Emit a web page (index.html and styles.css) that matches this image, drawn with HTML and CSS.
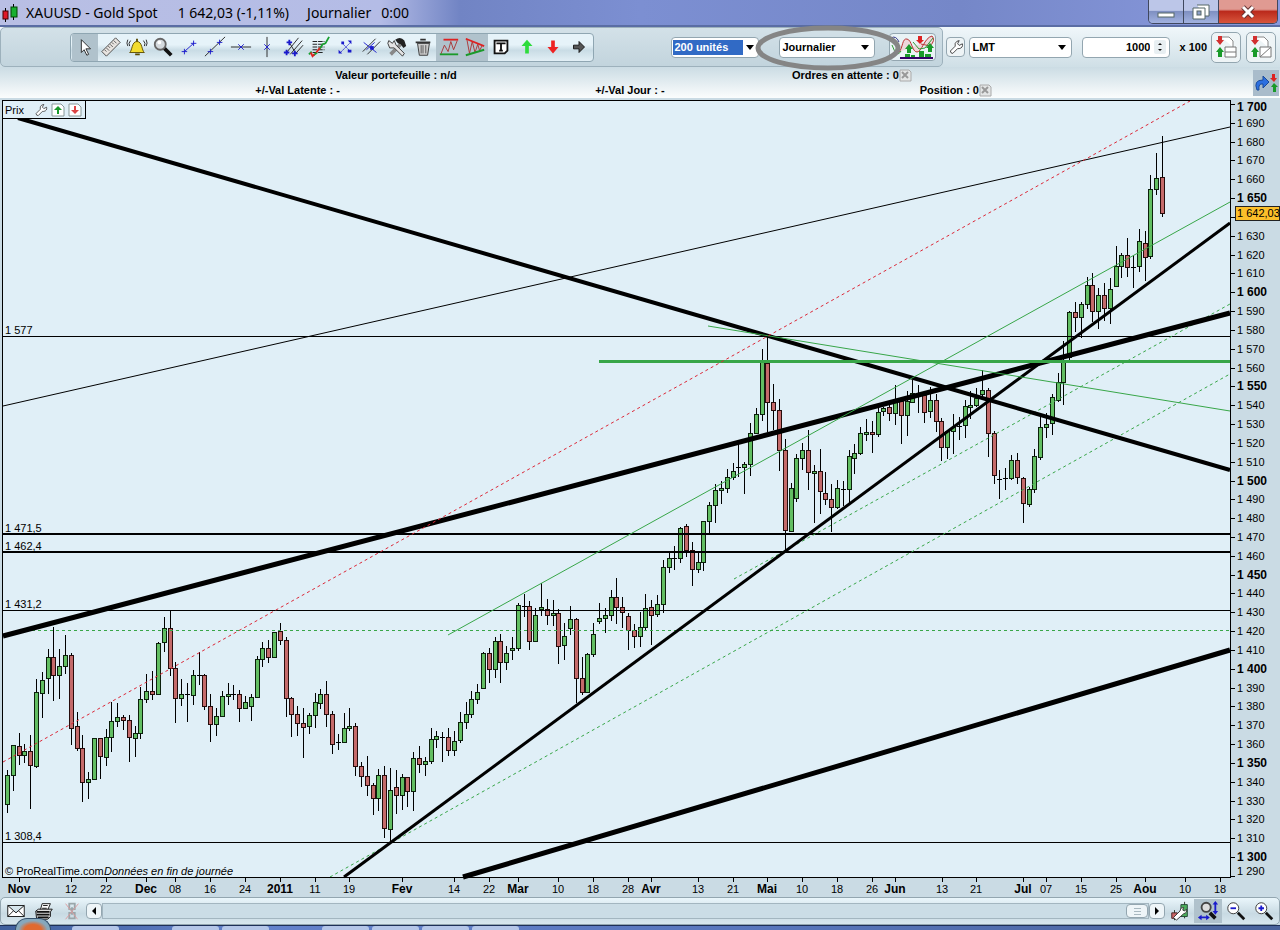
FILE: index.html
```html
<!DOCTYPE html>
<html lang="fr">
<head>
    <meta charset="UTF-8">
    <meta name="viewport" content="width=device-width, initial-scale=1.0">
    <title>XAUUSD - Gold Spot</title>
    <link rel="stylesheet" href="styles.css">
</head>
<body>

    <header class="titlebar">
        <svg class="app-icon" width="16" height="18" viewBox="0 0 16 18"><path d="M3.5 4v14M11.5 0v16" stroke="#000"/><rect x="1" y="7" width="5" height="8" fill="#e01828" stroke="#400"/><rect x="9" y="3" width="6" height="10" fill="#18b030" stroke="#040"/></svg>
        <h1>XAUUSD - Gold Spot</h1>
        <span class="quote">1 642,03 (-1,11%)</span>
        <span class="period">Journalier</span>
        <span>0:00</span>
        <div class="window-buttons">
            <button aria-label="Réduire"><svg width="18" height="14" viewBox="0 0 18 14"><rect x="1" y="8" width="16" height="4" fill="#fff" stroke="#566"/></svg></button>
            <button aria-label="Restaurer"><svg width="18" height="16" viewBox="0 0 18 16"><path d="M5 1h12v11h-4M1 4h12v11H1z" fill="#fff" stroke="#566"/><rect x="5" y="7" width="4" height="4" fill="#8ea0c8" stroke="#566"/></svg></button>
            <button class="close" aria-label="Fermer"><svg width="18" height="14" viewBox="0 0 18 14"><path d="M4 2l10 10M14 2L4 12" stroke="#633" stroke-width="5"/><path d="M4 2l10 10M14 2L4 12" stroke="#fff" stroke-width="3"/></svg></button>
        </div>
    </header>

    <div class="toolbar">
        <div class="tools-panel">
            <div class="tools">
                <button class="active" aria-label="Pointeur"><svg viewBox="0 0 24 24"><path d="M8 4v14l3-3 3 6 2-1-3-6h5z" fill="#fff" stroke="#222"/></svg></button>
                <button aria-label="Règle"><svg viewBox="0 0 24 24"><path d="M2 17L17 2l5 5L7 22z" fill="#e8e4e0" stroke="#444"/><path d="M5 15l2 2M7 13l3 3M9 11l2 2M11 9l3 3M13 7l2 2M15 5l3 3" stroke="#555"/></svg></button>
                <button aria-label="Alarme"><svg viewBox="0 0 24 24"><path d="M4 18c3-2 2-12 8-12s5 10 8 12z" fill="#f2dc30" stroke="#5a4a00"/><path d="M12 3v3M10 20h5" stroke="#5a4a00" stroke-width="2"/><path d="M5 5q-3 3-1 6M2 4q-2 4 0 7M19 5q3 3 1 6M22 4q2 4 0 7" fill="none" stroke="#222"/></svg></button>
                <button aria-label="Loupe"><svg viewBox="0 0 24 24"><path d="M13 13l8 8" stroke="#111" stroke-width="4"/><circle cx="9" cy="9" r="6" fill="#d4dade" stroke="#666" stroke-width="2"/><circle cx="8" cy="7" r="2" fill="#fff"/></svg></button>
                <button aria-label="Segment"><svg viewBox="0 0 24 24"><path d="M7 17L17 8" stroke="#1a1acc"/><path d="M4 17h6M7 14v6M14 8h6M17 5v6" stroke="#1a1acc"/></svg></button>
                <button aria-label="Droite"><svg viewBox="0 0 24 24"><path d="M1 22L23 1" stroke="#222"/><path d="M4 17h6M7 14v6M14 7h6M17 4v6" stroke="#1a1acc"/></svg></button>
                <button aria-label="Ligne horizontale"><svg viewBox="0 0 24 24"><path d="M1 12h22" stroke="#222"/><path d="M9 9l6 6M15 9l-6 6" stroke="#1a1acc"/></svg></button>
                <button aria-label="Ligne verticale"><svg viewBox="0 0 24 24"><path d="M12 1v22" stroke="#222"/><path d="M9 9l6 6M15 9l-6 6" stroke="#1a1acc"/></svg></button>
                <button aria-label="Fourchette"><svg viewBox="0 0 24 24"><path d="M5 18L18 2M9 20L22 5M15 19l8-9M8 7l7 12" stroke="#222"/><path d="M2 18h6M5 15v6M5 7h6M8 4v6M11 19h6M14 16v6" stroke="#1a1acc" stroke-width="2"/></svg></button>
                <button aria-label="Fibonacci"><svg viewBox="0 0 24 24"><path d="M5 6h13M5 9h13M5 12h13M5 15h13M5 18h12" stroke="#111" stroke-dasharray="5 1"/><path d="M12 15l4-6 3-1 4-7" fill="none" stroke="#18a030" stroke-width="2"/><path d="M1 20l3-3M6 21l4-3" stroke="#18a030" stroke-width="2"/><path d="M3 18l2 4 2-2M9 18l4-5" fill="none" stroke="#e02020" stroke-width="2"/></svg></button>
                <button aria-label="Déplacer"><svg viewBox="0 0 24 24"><path d="M7 18L18 7M9 8l9 9" stroke="#1a1acc" stroke-dasharray="2 1"/><path d="M5 15v4h4zM19 9V5h-4zM8 6h3v3H8zM15 15h4v3h-4z" fill="#1a1acc"/></svg></button>
                <button aria-label="Parallèles"><svg viewBox="0 0 24 24"><path d="M3 17L17 3M8 20L22 6" stroke="#222"/><path d="M4 7l14 11M7 15l9-8" stroke="#1a1acc"/><path d="M11 11h4v4h-4z" fill="#1a1acc"/></svg></button>
                <button aria-label="Outils"><svg viewBox="0 0 24 24"><path d="M5 20L16 9" stroke="#888" stroke-width="4"/><path d="M10 4q6-4 10 1l2 6-3 2-3-4-3-1z" fill="#222"/><path d="M3 5l4 3 2-3 2 5 9 9-2 3-9-9-5 0-2-5z" fill="#e4e4e4" stroke="#333"/></svg></button>
                <button aria-label="Supprimer"><svg viewBox="0 0 24 24"><path d="M6 8h13l-2 13H8z" fill="#ccc" stroke="#333"/><path d="M4 7h16M9 4h6" stroke="#333" stroke-width="2"/><path d="M10 10v9M12 10v9M15 10v9" stroke="#555"/></svg></button>
                <button class="active" aria-label="Indicateur"><svg viewBox="0 0 24 24"><path d="M3 20l4-10 4 7 3-11 3 9 4-10" fill="none" stroke="#a33"/><path d="M6 4h16" stroke="#d22" stroke-width="2"/><path d="M2 20h20" stroke="#1a9a2a" stroke-width="2"/></svg></button>
                <button class="active" aria-label="Figures"><svg viewBox="0 0 24 24"><path d="M3 3l3 16 3-13 3 12 3-9 2 7 3-6" fill="none" stroke="#a33"/><path d="M2 3l20 8" stroke="#d22" stroke-width="2"/><path d="M2 21l20-6" stroke="#1a9a2a" stroke-width="2"/></svg></button>
                <button aria-label="Texte"><svg viewBox="0 0 24 24"><path d="M5 5h14v11l-3 3H5z" fill="#fff" stroke="#111" stroke-width="2"/><path d="M8 9V8h8v1M12 8v8M10 16h4" fill="none" stroke="#111" stroke-width="2"/></svg></button>
                <button aria-label="Achat"><svg viewBox="0 0 24 24"><path d="M12 4l6 7h-4v8h-4v-8H6z" fill="#2edc3c"/></svg></button>
                <button aria-label="Vente"><svg viewBox="0 0 24 24"><path d="M12 19l6-7h-4V5h-4v7H6z" fill="#ee2222"/></svg></button>
                <button aria-label="Suivant"><svg viewBox="0 0 24 24"><path d="M6 10h6V6l6 6-6 6v-4H6z" fill="#555" stroke="#111"/></svg></button>
            </div>
            <div class="fields">
                <select class="field units" aria-label="Unités"><option>200 unités</option></select>
                <div class="highlighted">
                    <select class="field timeframe" aria-label="Période"><option>Journalier</option></select>
                    <svg class="ring" width="146" height="48" viewBox="0 0 146 48"><ellipse cx="73" cy="24" rx="70" ry="20" fill="none" stroke="#858585" stroke-width="5"/></svg>
                </div>
                <button class="indicators" aria-label="Ajouter un indicateur"><svg width="44" height="26" viewBox="0 0 44 26"><path d="M0 4q5-3 8 4" fill="none" stroke="#338"/><path d="M8 18C12 14 11 4 16 5s5 13 10 13 7-14 15-16q4 4-2 10l-9-2" fill="#f0c4c8" fill-opacity="0.600" stroke="#b33"/><path d="M1 11q5 14 9 6M22 8l6 7 6-1 8-10" fill="none" stroke="#393"/><path d="M18 10l4 5h-2v4h-4v-4h-2zM39 9l4 5h-2v4h-4v-4h-2z" fill="#1a9a2a"/><path d="M29 10l4-4h-2V2h-4v4h-2z" fill="#d22"/><path d="M14 23v-3h5v3zM20 23v-2h4v2zM28 23v-6h5v6zM34 23v-3h6v3z" fill="#1a9a2a"/><path d="M9 24h33" stroke="#306" stroke-width="2"/></svg></button>
            </div>
        </div>
        <div class="order-panel">
            <button class="small" aria-label="Réglages"><svg viewBox="0 0 20 20"><path d="M3 15l6-6q-1-4 2-6l3-1-2 4 2 2 4-2q1 5-4 6l-2 0-6 6q-3 0-3-3z" fill="#fff" stroke="#222"/></svg></button>
            <select class="field order-type" aria-label="Type d'ordre"><option>LMT</option></select>
            <div class="quantity">
                <input class="field" type="text" value="1000" aria-label="Quantité">
                <svg width="12" height="14" viewBox="0 0 12 14"><rect width="12" height="14" rx="2" fill="#e8eff2"/><path d="M4 5l2-2 2 2zM4 9l2 2 2-2z" fill="#111"/></svg>
            </div>
            <span class="multiplier">x 100</span>
            <button class="big" aria-label="Ordres sur graphique"><svg viewBox="0 0 26 26"><path d="M8 3h8l4 4v6" fill="#fff" stroke="#888"/><path d="M12 13h11v10H12zM12 18h11" fill="#fff" stroke="#777"/><path d="M7 11l4-5H9V2H5v4H3z" fill="#d23030"/><path d="M7 13l4 5H9v5H5v-5H3z" fill="#1a9a2a"/></svg></button>
            <button class="big" aria-label="Ordres sur droite"><svg viewBox="0 0 26 26"><path d="M8 3h8l4 4v6" fill="#fff" stroke="#888"/><path d="M12 13h11v10H12zM12 23l11-10" fill="#fff" stroke="#777"/><path d="M7 11l4-5H9V2H5v4H3z" fill="#d23030"/><path d="M7 13l4 5H9v5H5v-5H3z" fill="#1a9a2a"/></svg></button>
        </div>
    </div>

    <div class="account">
        <div class="account-lines">
            <div class="line line-top">
                <span class="centered">Valeur portefeuille : n/d</span>
                <span class="with-button">Ordres en attente : 0<button aria-label="Annuler les ordres"><svg viewBox="0 0 13 13"><path d="M1 1h9l2 2v9H1z" fill="#e4e6e6" stroke="#aaa"/><path d="M3 3l6 6M9 3L3 9" stroke="#999" stroke-width="2"/></svg></button></span>
            </div>
            <div class="line line-bottom">
                <span class="centered">+/-Val Latente : -</span>
                <span>+/-Val Jour : -</span>
                <span class="with-button">Position : 0<button aria-label="Clôturer la position"><svg viewBox="0 0 13 13"><path d="M1 1h9l2 2v9H1z" fill="#e4e6e6" stroke="#aaa"/><path d="M3 3l6 6M9 3L3 9" stroke="#999" stroke-width="2"/></svg></button></span>
            </div>
        </div>
        <button class="switch" aria-label="Trading"><svg viewBox="0 0 26 26"><path d="M4 20q-4-10 6-10V6l6 6-6 6v-4q-5-1-4 6z" fill="#2c6fe0" stroke="#1a4a9a"/><path d="M21 12l3-4h-2V4h-3v4h-2z" fill="#d22"/><path d="M21 13l4 4h-2v5h-3v-5h-2z" fill="#1a9a2a"/></svg></button>
    </div>

    <main class="chart">
        <svg class="plot" id="plot" viewBox="0 98 1280 799">
            <rect x="2" y="100" width="1228" height="777" fill="#e0eff7"/>
            <g id="candles" shape-rendering="crispEdges"></g>

            <!-- Support and resistance levels -->
            <g stroke="#000" shape-rendering="crispEdges">
                <path d="M3 336.500H1230M3 610.500H1230M3 842.500H1230"/>
                <path d="M3 534H1230M3 552H1230" stroke-width="2"/>
            </g>
            <path class="dashed green" d="M26 630.500H1230"/>

            <!-- Trend lines -->
            <path class="dashed green" d="M330 877L1230 374M734 579L1230 304"/>
            <path class="trend" stroke-width="4" d="M18 118L1230 470"/>
            <path class="trend" stroke-width="5" d="M3 636L1230 313M463 877L1230 650"/>
            <path class="trend" stroke-width="3" d="M344 877L1230 223"/>
            <path class="trend" stroke-width="1" d="M3 406L1230 127"/>
            <path class="green" d="M448 635L1230 202M708 326L1230 411"/>
            <path class="green" stroke-width="3" d="M599 361.500H1230"/>
            <path class="dashed red" d="M3 762L1190 101"/>

            <path d="M2.500 877V100.500H1230.500V877.500H2" fill="none" stroke="#000" shape-rendering="crispEdges"/>
            <g id="levels">
                <text x="5" y="334">1 577</text>
                <text x="5" y="532">1 471,5</text>
                <text x="5" y="550">1 462,4</text>
                <text x="5" y="608">1 431,2</text>
                <text x="5" y="840">1 308,4</text>
                <text x="5" y="875">© ProRealTime.com</text>
                <text x="104" y="875" font-style="italic">Données en fin de journée</text>
            </g>
            <g id="axes"></g>
            <rect x="1235.500" y="206.500" width="44" height="14" fill="#fcbf2a" stroke="#222"/>
            <text x="1237" y="217">1 642,03</text>
        </svg>
        <div class="price-tab">
            <span>Prix</span>
            <button aria-label="Réglages du prix"><svg viewBox="0 0 20 20"><path d="M3 15l6-6q-1-4 2-6l3-1-2 4 2 2 4-2q1 5-4 6l-2 0-6 6q-3 0-3-3z" fill="#fff" stroke="#222"/></svg></button>
            <button aria-label="Monter"><svg viewBox="0 0 14 14"><path d="M1 1h9l3 3v9H1z" fill="#fff" stroke="#899"/><path d="M7 3l4 4H8v4H6V7H3z" fill="#1a9a2a"/></svg></button>
            <button aria-label="Descendre"><svg viewBox="0 0 14 14"><path d="M1 1h9l3 3v9H1z" fill="#fff" stroke="#899"/><path d="M7 11l4-4H8V3H6v4H3z" fill="#d44"/></svg></button>
        </div>
    </main>

    <footer class="bottombar">
        <button aria-label="Envoyer"><svg viewBox="0 0 24 24"><path d="M3 6h18v12H3zM3 6l9 8 9-8M3 18l6-6M21 18l-6-6" fill="#fff" stroke="#111"/></svg></button>
        <button aria-label="Imprimer"><svg viewBox="0 0 24 24"><path d="M8 11l2-7h9l-3 7" fill="#fff" stroke="#111"/><path d="M11 6h5M10 9h5" stroke="#111"/><path d="M3 12l3-2h15l-2 3v5l-3 3H4z" fill="#ddd" stroke="#111"/><path d="M4 13h14M4 16h14M5 19h12" stroke="#111" stroke-width="2"/></svg></button>
        <button aria-label="Lien"><svg viewBox="0 0 24 24"><path d="M9 4h6v6H9zM12 8v8M9 14h6v6H9z" fill="none" stroke="#9aa6aa" stroke-width="2"/><path d="M5 4l13 17M19 4L5 21" stroke="#dc9a9e"/></svg></button>
        <button class="scroll-arrow" aria-label="Défiler à gauche"><svg viewBox="0 0 14 14"><path d="M9 3v8L5 7z"/></svg></button>
        <div class="track"><div class="thumb"></div></div>
        <button class="scroll-arrow" aria-label="Défiler à droite"><svg viewBox="0 0 14 14"><path d="M5 3v8l4-4z"/></svg></button>
        <div class="zoom-tools">
            <button aria-label="Style du graphique"><svg viewBox="0 0 24 24"><path d="M6 11v11M17 2v18" stroke="#232"/><path d="M3 14h6v6H3z" fill="#c66" stroke="#422"/><path d="M13 5h7v13h-7z" fill="#4cae5c" stroke="#243"/><path d="M5 19l7-7q0-4 4-4l-1 3 2 1 2-2q1 4-3 5l-8 7z" fill="#fff" stroke="#333"/></svg></button>
            <button class="active" aria-label="Zoom automatique"><svg viewBox="0 0 24 24"><path d="M14 14l6 6" stroke="#111" stroke-width="4"/><circle cx="10" cy="8" r="5" fill="#ddd" stroke="#444" stroke-width="2"/><path d="M20 4v9M4 19h8" stroke="#1a1acc" stroke-width="2"/><path d="M20 1l3 4h-6zM20 16l3-4h-6zM1 19l4-3v6zM14 19l-4-3v6z" fill="#1a1acc"/></svg></button>
            <button aria-label="Zoom arrière"><svg viewBox="0 0 24 24"><path d="M14 14l7 7" stroke="#111" stroke-width="3"/><circle cx="9" cy="9" r="6" fill="#fff" stroke="#333"/><path d="M6 9h6" stroke="#1a1acc" stroke-width="2"/></svg></button>
            <button aria-label="Zoom avant"><svg viewBox="0 0 24 24"><path d="M14 14l7 7" stroke="#111" stroke-width="3"/><circle cx="9" cy="9" r="6" fill="#fff" stroke="#333"/><path d="M6 9h6M9 6v6" stroke="#1a1acc" stroke-width="2"/></svg></button>
        </div>
    </footer>

    <div class="taskbar">
        <span class="orb"></span>
        <span class="task"></span><span class="task gap"></span><span class="task"></span><span class="task gap"></span><span class="task"></span><span class="task"></span><span class="task"></span>
    </div>

    <script src="chart.js"></script>
</body>
</html>
```
FILE: styles.css
```css
* {
    box-sizing: border-box;
}
body {
    margin: 0;
    background: #cadbe4;
    color: #000;
    font-family: "Liberation Sans", Arial, sans-serif;
    font-size: 11px;
}
button {
    padding: 0;
    border: none;
    background: none;
    display: flex;
    align-items: center;
    justify-content: center;
    flex-shrink: 0;
    cursor: pointer;
}
svg {
    display: block;
}

/* Title bar */
.titlebar {
    display: flex;
    align-items: center;
    height: 27px;
    padding-left: 2px;
    background: linear-gradient(90deg, #b9bfe4 0, #b4bce6 380px, #7184c4 460px, #7c8fd2 50%, #7587c8 75%, #8a9ade 100%);
    border-bottom: 2px solid #5a6da4;
    font-family: "Noto Sans", "Open Sans", sans-serif;
    font-size: 14px;
    white-space: nowrap;
}
.titlebar h1 {
    margin: 0 20px 0 8px;
    font-size: 14px;
    font-weight: normal;
}
.quote {
    margin-right: 18px;
}
.period {
    margin-right: 10px;
}
.window-buttons {
    display: flex;
    align-self: flex-start;
    height: 24px;
    margin: 0 2px 0 auto;
    border: 1px solid #40485e;
    border-top: none;
    border-radius: 0 0 5px 5px;
    overflow: hidden;
}
.window-buttons button {
    width: 35px;
    border-right: 1px solid #40485e;
    background: linear-gradient(#bcc6e8 45%, #7f90c2 50%, #a2b2e0);
}
.window-buttons .close {
    width: 58px;
    border-right: none;
    background: linear-gradient(#e09a92 40%, #bb2a1c 50%, #d8553c);
}

/* Toolbar */
.toolbar {
    display: flex;
    height: 40px;
    background: linear-gradient(#f0f7fa, #cfdfe6);
}
.tools-panel {
    display: flex;
    flex: 1;
    align-items: center;
    padding: 0 6px 0 69px;
    border: 1px solid #9db1bc;
    border-radius: 5px;
    background: linear-gradient(#d3e1e8, #c2d4dd);
}
.tools {
    display: flex;
    padding: 0 1px;
    border: 1px solid #8fa6b2;
    border-radius: 4px;
    background: linear-gradient(#e6f3f9 40%, #c9dce5 60%, #e2eff5);
}
.tools button {
    width: 26px;
    height: 27px;
}
.tools svg {
    width: 22px;
    height: 22px;
}
.active,
.tools .active {
    background: #b0c2cc;
}
.fields {
    display: flex;
    align-items: center;
    gap: 14px;
    margin-left: auto;
}
.field {
    height: 21px;
    border: 1px solid #93a6b0;
    border-radius: 4px;
    background: #fff;
    color: #000;
    font: bold 11px "Liberation Sans", Arial, sans-serif;
}
select.field {
    appearance: none;
    padding: 0 2px;
    background: url("data:image/svg+xml,%3Csvg xmlns='http://www.w3.org/2000/svg' width='8' height='5'%3E%3Cpath d='M0 0h8L4 5z'/%3E%3C/svg%3E") no-repeat right 5px center #fff;
}
select.units {
    width: 88px;
    color: #fff;
    background: url("data:image/svg+xml,%3Csvg xmlns='http://www.w3.org/2000/svg' width='8' height='5'%3E%3Cpath d='M0 0h8L4 5z'/%3E%3C/svg%3E") no-repeat right 4px center, linear-gradient(#316ac5, #316ac5) no-repeat 1px 2px / 70px 15px #fff;
}
.timeframe {
    width: 96px;
}
.highlighted {
    position: relative;
    margin-left: 6px;
}
/* Hand drawn ring over the timeframe list */
.ring {
    position: absolute;
    top: -13px;
    left: -24px;
    z-index: 2;
    pointer-events: none;
}
.indicators {
    width: 47px;
    height: 28px;
    border: 1px solid #93a6b0;
    border-radius: 4px;
    background: #e9f3f5;
}
.order-panel {
    display: flex;
    align-items: center;
    padding: 0 4px 0 3px;
}
.small {
    width: 19px;
    height: 20px;
    border: 1px solid #93a6b0;
    border-radius: 4px;
    background: #eef4f6;
}
.small svg {
    width: 16px;
    height: 16px;
}
.order-type {
    width: 103px;
    margin: 0 10px 0 4px;
}
.quantity {
    position: relative;
}
.quantity input {
    display: block;
    width: 88px;
    padding: 0 19px 0 4px;
    text-align: right;
}
.quantity svg {
    position: absolute;
    top: 3px;
    right: 4px;
}
.multiplier {
    margin: 0 4px 0 9px;
    font-weight: bold;
    white-space: nowrap;
}
.big {
    width: 30px;
    height: 31px;
    margin-right: 5px;
    border: 1px solid #93a6b0;
    border-radius: 5px;
    background: #eef4f6;
}
.big:last-child {
    margin-right: 0;
}
.big svg {
    width: 26px;
    height: 26px;
}

/* Account summary */
.account {
    display: flex;
    align-items: center;
    height: 31px;
    background: linear-gradient(#cbdce4, #fbfdfd);
    font-weight: bold;
}
.account-lines {
    flex: 1;
}
.line {
    display: grid;
    height: 15px;
    align-items: center;
    white-space: nowrap;
}
.line-top {
    grid-template-columns: 632fr 368fr;
}
.line-bottom {
    grid-template-columns: 475fr 259fr 266fr;
}
.centered {
    text-align: center;
}
.with-button {
    display: flex;
    align-items: center;
}
.with-button svg {
    width: 13px;
    height: 13px;
}
.switch {
    width: 26px;
    height: 26px;
    margin-right: 1px;
    background: #a9bccb;
}
.switch svg {
    width: 26px;
    height: 26px;
}

/* Chart */
.chart {
    position: relative;
}
.plot {
    width: 100%;
    height: auto;
}
.plot text {
    font-size: 11px;
}
.plot .major {
    font-size: 12px;
    font-weight: bold;
}
.trend {
    fill: none;
    stroke: #000;
}
.green {
    fill: none;
    stroke: #38a648;
}
.red {
    fill: none;
    stroke: #dc2838;
}
.dashed {
    stroke-dasharray: 3 3;
}
.up {
    fill: #62be62;
    stroke: #0c200c;
}
.down {
    fill: #c46a6a;
    stroke: #260c0c;
}
.price-tab {
    position: absolute;
    top: 2px;
    left: 2px;
    display: flex;
    align-items: center;
    width: 84px;
    height: 19px;
    padding-left: 2px;
    border: 1px solid #000;
    background: #e0eff7;
}
.price-tab span {
    margin-right: auto;
}
.price-tab svg {
    width: 14px;
    height: 14px;
    margin-right: 3px;
}

/* Bottom bar */
.bottombar {
    display: flex;
    align-items: center;
    height: 28px;
    padding: 0 1px;
    border: 1px solid #93a6b0;
    border-radius: 5px;
    background: linear-gradient(#eaf6fb, #c8dae3 60%, #d8e7ee);
}
.bottombar button {
    width: 28px;
    height: 24px;
}
.bottombar svg {
    width: 22px;
    height: 22px;
}
.bottombar .scroll-arrow {
    width: 16px;
    height: 16px;
    border: 1px solid #93a6b0;
    border-radius: 4px;
    background: #eef5f8;
}
.bottombar .scroll-arrow svg {
    width: 14px;
    height: 14px;
}
.track {
    display: flex;
    flex: 1;
    justify-content: flex-end;
    height: 16px;
    border: 1px solid #a3b6c0;
    background: #cbdde6;
}
.thumb {
    width: 22px;
    border: 1px solid #93a6b0;
    border-radius: 4px;
    background: repeating-linear-gradient(#a8b8c0 0 1px, #eef5f8 1px 3px) no-repeat center / 7px 7px #eef5f8;
}
.zoom-tools {
    display: flex;
    margin-left: 1px;
}

/* Taskbar edge */
.taskbar {
    position: relative;
    display: flex;
    height: 5px;
    padding-left: 72px;
    overflow: clip;
    overflow-clip-margin: 8px;
    background: linear-gradient(90deg, #3f5f9c, #6482cc 20%, #5876bc 60%, #4a649c);
    border-top: 1px solid #1e3058;
}
.task {
    width: 47px;
    margin-right: 3px;
    border-radius: 3px 3px 0 0;
    background: #b4c6e8;
}
.task.gap {
    margin-left: 50px;
}
.orb {
    position: absolute;
    top: -8px;
    left: 15px;
    width: 36px;
    height: 12px;
    border: 1px solid #34506c;
    border-bottom: none;
    border-radius: 18px 18px 0 0;
    background: radial-gradient(ellipse at bottom, #e06a30 35%, #86a8bc 60%);
}
```
FILE: chart.js
```javascript
const SVG_NS = "http://www.w3.org/2000/svg";

// one entry per day: high, body top, body bottom, low (chart units), u = up, d = down
const days = `
770,775,804,813,u 745,745,775,791,u 733,746,755,765,d 744,751,755,763,u 735,751,765,809,d 679,692,766,768,u
672,680,693,718,u 649,657,678,694,u 627,657,675,701,d 649,666,675,699,u 635,655,666,674,u 653,655,728,745,d
712,726,748,751,d 735,748,782,802,d 772,779,782,799,u 738,738,779,780,u 738,738,756,779,d 729,737,757,766,u
702,721,737,752,u 703,717,721,727,u 715,717,720,730,d 715,720,737,762,d 726,733,738,757,u 687,699,733,739,u
674,691,699,703,u 671,691,694,700,d 642,643,694,695,u 617,628,642,652,u 611,628,668,676,d 662,668,698,723,d
679,694,698,706,u 683,694,694,722,d 670,675,695,705,u 652,675,675,685,u 674,675,706,710,d 694,706,724,742,d
708,716,724,736,u 691,696,716,717,u 683,694,696,705,u 685,694,694,700,u 690,694,708,722,d 696,702,708,709,u
694,697,706,721,u 656,659,697,698,u 642,648,659,667,u 640,648,657,663,d 632,632,657,658,u 623,631,640,645,d
637,640,698,717,d 697,698,714,737,d 706,714,723,736,d 708,723,727,758,d 713,715,726,734,u 693,702,715,728,u
689,694,703,709,u 681,694,714,727,d 711,714,744,754,d 734,742,742,750,d 713,728,742,743,u 708,726,728,731,u
723,726,766,776,d 762,766,776,787,d 756,776,785,796,d 783,785,798,815,d 769,775,798,811,u 766,775,828,838,d
768,790,829,841,u 770,787,795,814,d 774,777,795,810,u 777,777,791,807,d 752,758,791,811,u 746,758,764,773,d
757,761,764,776,u 728,739,761,764,u 731,736,739,748,u 732,737,737,762,d 728,737,750,756,d 731,741,750,756,u
712,722,740,743,u 702,714,722,729,u 691,699,714,718,u 684,692,699,704,u 652,653,688,689,u 648,653,669,683,d
637,641,669,678,u 634,641,662,683,d 646,653,662,670,u 637,648,650,660,u 603,605,648,651,u 594,606,606,617,d
601,606,641,650,d 608,615,641,642,u 583,607,609,616,u 599,609,615,625,d 600,613,615,626,u 609,613,646,664,d
623,636,645,660,u 606,619,628,635,u 618,619,678,703,d 657,678,692,695,d 653,654,692,693,u 623,634,654,657,u
603,618,621,624,u 608,615,618,633,u 590,597,615,621,u 578,597,607,624,d 597,607,612,628,d 613,616,630,650,d
624,630,636,648,d 612,627,636,647,u 594,608,627,631,u 600,607,615,645,d 595,604,614,617,u 560,567,604,613,u
553,558,567,573,u 546,558,558,570,d 527,528,558,563,u 524,526,550,557,d 542,550,569,586,d 552,562,569,573,u
521,521,562,571,u 502,505,521,533,u 484,490,505,523,u 481,488,490,504,u 469,477,488,493,u 463,471,477,480,u
444,467,467,477,d 462,464,467,494,u 423,433,464,476,u 408,414,433,434,u 349,361,414,421,u 337,363,402,432,d
384,402,410,430,d 399,410,450,471,d 439,450,530,550,d 483,488,531,532,u 454,458,498,502,u 443,450,458,470,u
430,450,472,490,d 465,471,473,523,u 449,471,491,514,d 472,493,499,505,d 484,499,507,532,d 480,488,507,509,u
481,489,489,506,d 450,456,489,503,u 444,453,458,474,u 427,433,453,455,u 419,432,434,441,u 421,432,434,453,d
407,412,434,437,u 407,408,411,416,u 403,407,413,421,d 385,402,413,425,u 397,401,415,444,d 391,401,415,436,u
380,393,402,403,u 385,395,395,413,d 393,395,412,423,d 387,400,411,418,u 394,400,421,432,d 418,421,447,461,d
430,431,447,459,u 414,427,431,454,u 417,426,426,440,d 400,406,425,438,u 391,405,407,419,u 388,398,405,407,u
370,390,394,397,u 388,390,433,457,d 431,433,475,484,d 470,479,479,499,d 468,478,478,490,d 455,460,478,480,u
453,460,477,484,d 477,478,503,523,d 487,489,504,507,u 449,456,489,493,u 417,427,457,460,u 413,424,427,438,u
394,397,423,435,u 373,382,400,402,u 341,362,382,405,u 311,312,357,361,u 302,312,317,332,d 302,304,317,338,u
277,285,304,309,u 273,285,311,322,d 288,295,311,329,u 283,295,308,321,d 278,289,308,324,u 246,266,286,287,u
253,255,266,278,u 238,255,267,277,d 255,267,267,288,d 229,241,266,272,u 231,243,257,281,d 175,189,256,259,u
153,178,189,195,u 136,177,213,217,d`.trim().split(/\s+/);

const dates = [
    ["Nov", 19], ["12", 71], ["22", 106], ["Dec", 146], ["08", 175], ["16", 210], ["24", 245], ["2011", 280],
    ["11", 315], ["19", 349], ["Fev", 402], ["14", 454], ["22", 489], ["Mar", 518], ["10", 558], ["18", 593],
    ["28", 628], ["Avr", 651], ["13", 698], ["21", 733], ["Mai", 767], ["10", 802], ["18", 837], ["26", 872],
    ["Jun", 895], ["13", 942], ["21", 976], ["Jul", 1023], ["07", 1046], ["15", 1081], ["25", 1116],
    ["Aou", 1145], ["10", 1185], ["18", 1220]
];

function add(parent, name, attributes, text) {
    const node = document.createElementNS(SVG_NS, name);
    for (const key in attributes) {
        node.setAttribute(key, attributes[key]);
    }
    if (text) {
        node.textContent = text;
    }
    parent.appendChild(node);
}

function drawCandles() {
    const group = document.getElementById("candles");
    days.forEach((day, i) => {
        const [high, top, bottom, low, way] = day.split(",");
        const x = Math.round(7 + i * 5.804) + 0.5;
        const y = Number(top) + 0.5;
        add(group, "path", { d: `M${x} ${high}V${low}`, stroke: "#000" });
        if (top === bottom) {
            add(group, "path", { d: `M${x - 2.5} ${y}h5`, stroke: "#000" });
        } else {
            add(group, "rect", { x: x - 2, y: y, width: 4, height: bottom - top, class: way === "u" ? "up" : "down" });
        }
    });
}

function drawAxes() {
    const group = document.getElementById("axes");
    for (let price = 1700; price >= 1290; price -= 10) {
        const y = Math.round(104 + (1700 - price) * 1.8825);
        add(group, "path", { d: `M1231 ${y + 0.5}h4`, stroke: "#000" });
        if (price === 1640) continue;
        const textY = price === 1700 ? y + 7 : price === 1290 ? y - 1 : y + 4;
        const label = "1 " + String(price).slice(1);
        add(group, "text", { x: 1237, y: textY, class: price % 50 === 0 ? "major" : "minor" }, label);
    }
    dates.forEach(([label, x]) => {
        const major = isNaN(label) || label.length === 4;
        add(group, "path", { d: `M${x + 0.5} 878v4`, stroke: "#000" });
        add(group, "text", { x: x, y: 893, "text-anchor": "middle", class: major ? "major" : "minor" }, label);
    });
}

drawCandles();
drawAxes();
```
